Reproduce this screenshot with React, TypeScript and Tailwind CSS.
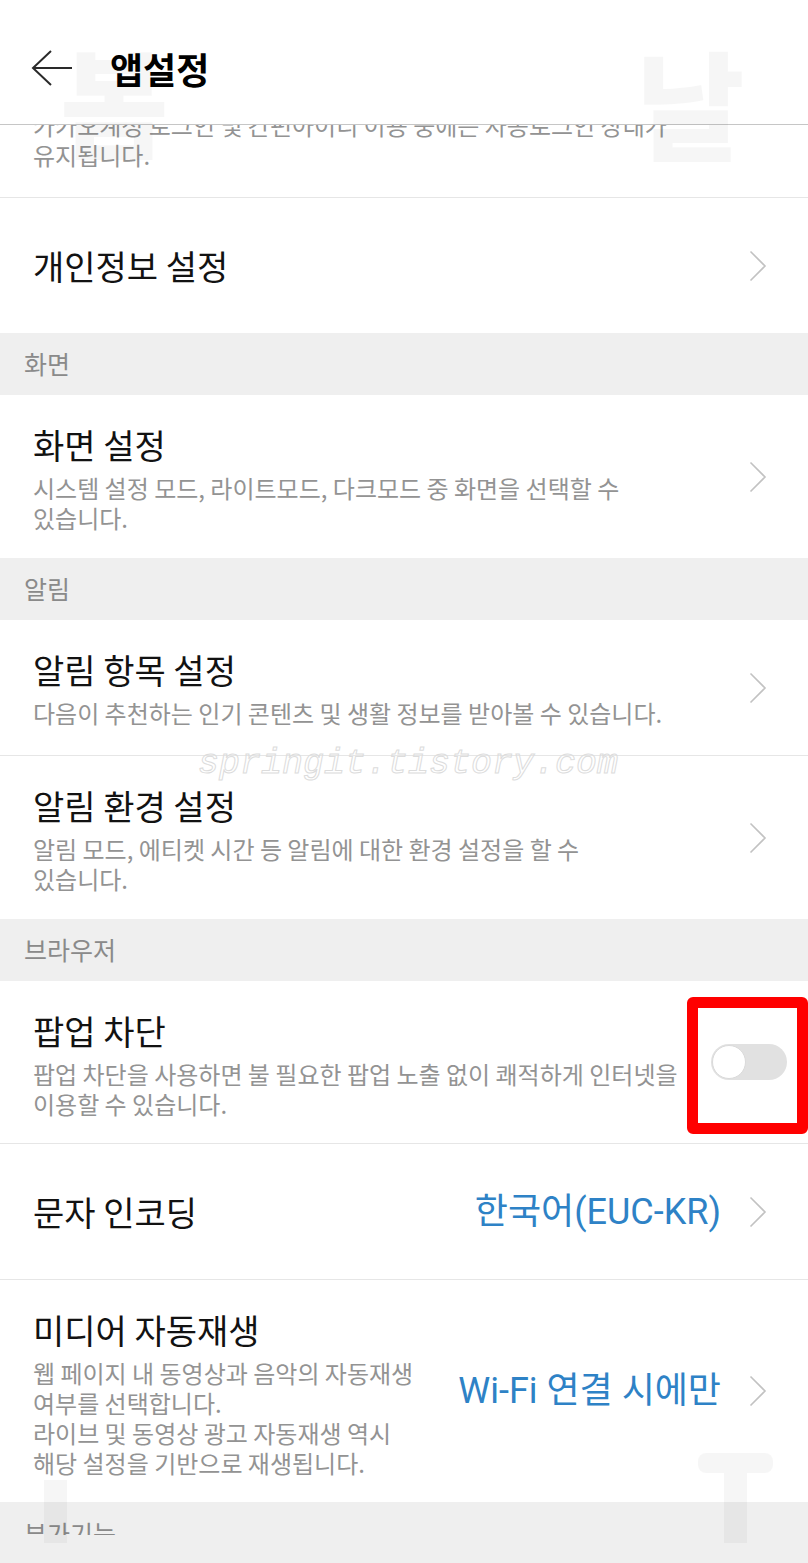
import React from "react";

const FONT = '"Noto Sans CJK KR", "Noto Sans", sans-serif';
const VALUE_FONT = 'Roboto, "Noto Sans CJK KR", sans-serif';

function Chevron() {
  return (
    <svg width="18" height="32" viewBox="0 0 18 32" fill="none">
      <path d="M1.5 1.5 L16 16 L1.5 30.5" stroke="#c2c2c2" strokeWidth="1.6" strokeLinejoin="miter" />
    </svg>
  );
}

function Section({ label }: { label: string }) {
  return (
    <div className="h-[62px] bg-[#efefef] flex items-center pl-[24px] text-[25px] text-[#8a8a8a]">
      {label}
    </div>
  );
}

function Desc({ lines }: { lines: string[] }) {
  return (
    <div className="mt-[8px] text-[24px] leading-[30px] text-[#939393] whitespace-nowrap">
      {lines.map((l, i) => (
        <div key={i}>{l}</div>
      ))}
    </div>
  );
}

function Row({
  title,
  desc,
  right,
  h,
  border = true,
  pr = "pr-[41px]",
}: {
  title: string;
  desc?: string[];
  right: React.ReactNode;
  h: string;
  border?: boolean;
  pr?: string;
}) {
  return (
    <div
      className={`relative flex items-center pl-[33px] ${pr} ${h} ${
        border ? "border-b border-[#e6e6e6]" : ""
      }`}
    >
      <div className={`flex-1 min-w-0 ${desc ? "self-start pt-[30px]" : ""}`}>
        <div className="text-[34px] leading-[40px] text-[#121212]">{title}</div>
        {desc && <Desc lines={desc} />}
      </div>
      {right}
    </div>
  );
}

function Value({ text }: { text: string }) {
  return (
    <div className="flex items-center gap-[28px]">
      <span className="text-[36px] leading-[40px] text-[#2e82c6]" style={{ fontFamily: VALUE_FONT }}>
        {text}
      </span>
      <Chevron />
    </div>
  );
}

export default function App() {
  return (
    <div
      className="relative w-[808px] h-[1563px] overflow-hidden bg-white"
      style={{ fontFamily: FONT }}
    >
      {/* Header */}
      <div className="h-[125px] border-b border-[#c6c6c6] flex items-center pt-[12px] pl-[31px] gap-[37px]">
        <svg width="42" height="36" viewBox="0 0 42 36" fill="none">
          <path d="M41 18 H2 M20 1 L2 18 L20 35" stroke="#2a2a2a" strokeWidth="2" />
        </svg>
        <div className="text-[36px] font-bold text-black leading-[40px]">앱설정</div>
      </div>

      {/* partial scrolled row */}
      <div className="h-[73px] overflow-hidden border-b border-[#e6e6e6] pl-[33px]">
        <div className="-mt-[15px] text-[24px] leading-[30px] text-[#939393] whitespace-nowrap">
          <div>카카오계정 로그인 및 간편아이디 이용 중에는 자동로그인 상태가</div>
          <div>유지됩니다.</div>
        </div>
      </div>

      <Row title="개인정보 설정" h="h-[135px]" border={false} right={<Chevron />} />

      <Section label="화면" />
      <Row
        title="화면 설정"
        desc={["시스템 설정 모드, 라이트모드, 다크모드 중 화면을 선택할 수", "있습니다."]}
        h="h-[163px]"
        border={false}
        right={<Chevron />}
      />

      <Section label="알림" />
      <Row
        title="알림 항목 설정"
        desc={["다음이 추천하는 인기 콘텐츠 및 생활 정보를 받아볼 수 있습니다."]}
        h="h-[136px]"
        right={<Chevron />}
      />
      <Row
        title="알림 환경 설정"
        desc={["알림 모드, 에티켓 시간 등 알림에 대한 환경 설정을 할 수", "있습니다."]}
        h="h-[163px]"
        border={false}
        right={<Chevron />}
      />

      <Section label="브라우저" />
      <Row
        title="팝업 차단"
        desc={["팝업 차단을 사용하면 불 필요한 팝업 노출 없이 쾌적하게 인터넷을", "이용할 수 있습니다."]}
        h="h-[163px]"
        pr="pr-[21px]"
        right={
          <>
            <div className="relative w-[76px] h-[36px] rounded-full bg-[#e1e1e1] shrink-0">
              <div className="absolute left-[1px] top-[1px] w-[34px] h-[34px] rounded-full bg-white border border-[#dadada]" />
            </div>
            <div className="absolute right-0 top-[16px] w-[121px] h-[137px] border-[11px] border-[#ff0000] rounded-[6px] bg-transparent pointer-events-none" />
          </>
        }
      />
      <Row title="문자 인코딩" h="h-[136px]" right={<Value text="한국어(EUC-KR)" />} />
      <Row
        title="미디어 자동재생"
        desc={[
          "웹 페이지 내 동영상과 음악의 자동재생",
          "여부를 선택합니다.",
          "라이브 및 동영상 광고 자동재생 역시",
          "해당 설정을 기반으로 재생됩니다.",
        ]}
        h="h-[222px]"
        border={false}
        right={<Value text="Wi-Fi 연결 시에만" />}
      />

      <div className="h-[61px] bg-[#efefef] pl-[24px]">
        <div className="h-[33px] overflow-hidden text-[25px] leading-[62px] text-[#8a8a8a]">부가기능</div>
      </div>

      {/* watermark overlay */}
      <div className="absolute inset-0 pointer-events-none">
        <div className="absolute left-[60px] top-[40px] text-[118px] leading-none font-black text-black/[0.035]">봄</div>
        <div className="absolute left-[636px] top-[42px] text-[118px] leading-none font-black text-black/[0.035]">날</div>
        <div
          className="absolute left-[198px] top-[738px] text-[35px] italic text-transparent [-webkit-text-stroke:1px_#dcdcdc]"
          style={{ fontFamily: '"Liberation Mono", monospace' }}
        >
          springit.tistory.com
        </div>
        <div className="absolute left-[698px] top-[1453px] w-[75px] h-[20px] rounded-[8px] bg-black/[0.035]" />
        <div className="absolute left-[724px] top-[1473px] w-[23px] h-[70px] bg-black/[0.035]" />
        <div className="absolute left-[44px] top-[1480px] w-[23px] h-[63px] bg-black/[0.035]" />
      </div>
    </div>
  );
}
